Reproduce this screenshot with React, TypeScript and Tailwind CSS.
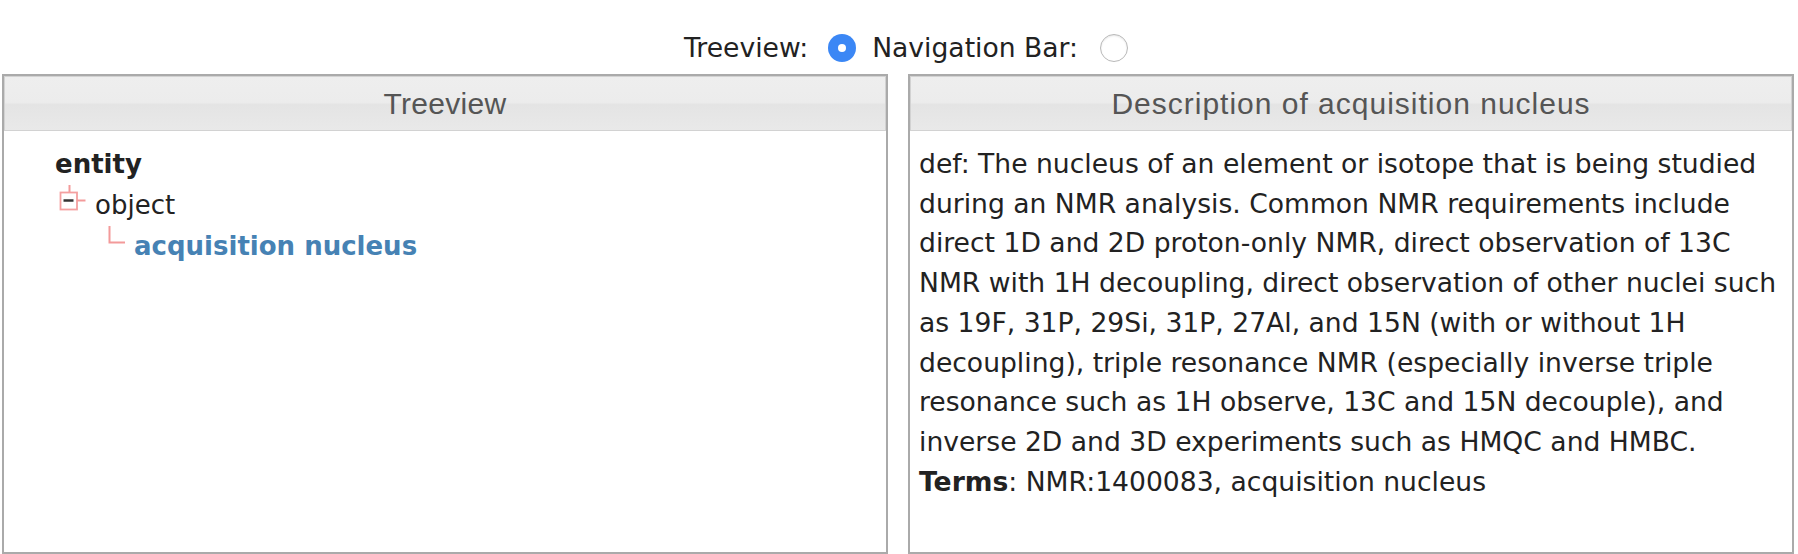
// Treeview / Description split panel page

const DESCRIPTION =
  "def: The nucleus of an element or isotope that is being studied during an NMR analysis. Common NMR requirements include direct 1D and 2D proton-only NMR, direct observation of 13C NMR with 1H decoupling, direct observation of other nuclei such as 19F, 31P, 29Si, 31P, 27Al, and 15N (with or without 1H decoupling), triple resonance NMR (especially inverse triple resonance such as 1H observe, 13C and 15N decouple), and inverse 2D and 3D experiments such as HMQC and HMBC.";

function Radio({ checked }: { checked?: boolean }) {
  if (checked) {
    return (
      <span className="flex h-[28px] w-[28px] items-center justify-center rounded-full bg-[#3b87f5]">
        <span className="block h-[8px] w-[8px] rounded-full bg-white" />
      </span>
    );
  }
  return (
    <span className="block h-[28px] w-[28px] rounded-full border border-[#b9b9b9] bg-white shadow-[inset_0_1px_2px_rgba(0,0,0,0.1)]" />
  );
}

function PanelHeader({ title, tracking }: { title: string; tracking: string }) {
  return (
    <div
      className={`flex h-[55px] items-center justify-center border border-[#d2d2d2] bg-[linear-gradient(to_bottom,#eeeeee_0%,#ececec_48%,#e4e4e4_52%,#e9e9e9_100%)] font-['Liberation_Sans',Arial,sans-serif] text-[30px] text-[#555555] ${tracking}`}
    >
      {title}
    </div>
  );
}

export default function App() {
  return (
    <div className="min-h-screen bg-white font-['DejaVu_Sans',Verdana,sans-serif] text-[26px] text-[#222222]">
      {/* 상단 보기 전환 */}
      <div className="flex h-[74px] items-center justify-center pt-[22px] pl-[14px] text-[26.6px]">
        <span>Treeview:</span>
        <span className="ml-[20px]">
          <Radio checked />
        </span>
        <span className="ml-[16px]">Navigation Bar:</span>
        <span className="ml-[22px]">
          <Radio />
        </span>
      </div>

      <div className="flex gap-[20px] pl-[2px] pr-[4px]">
        {/* 트리 */}
        <div className="flex h-[480px] flex-1 flex-col border-2 border-[#aaaaaa]">
          <PanelHeader title="Treeview" tracking="tracking-[0.3px]" />
          <div className="pt-[13px] leading-[41px]">
            <div className="h-[41px] pl-[51px] font-bold">entity</div>
            <div className="flex h-[41px] pl-[54px]">
              <svg width="30" height="41" className="shrink-0">
                <line x1="11.5" y1="-2" x2="11.5" y2="7" stroke="#f39a9a" strokeWidth="2" />
                <rect x="2.5" y="7.5" width="16.5" height="17" fill="white" stroke="#f4a0a0" strokeWidth="1.8" />
                <line x1="5.5" y1="15.5" x2="15.5" y2="15.5" stroke="#333" strokeWidth="2.5" />
                <line x1="19" y1="15.5" x2="27.5" y2="15.5" stroke="#f39a9a" strokeWidth="2" />
              </svg>
              <span className="ml-[7px]">object</span>
            </div>
            <div className="flex h-[41px] pl-[100px]">
              <svg width="22" height="41" className="shrink-0">
                <path d="M5.5 -4 V16.5 H21" fill="none" stroke="#f39a9a" strokeWidth="2" />
              </svg>
              <span className="ml-[8px] font-bold text-[#4682b4]">acquisition nucleus</span>
            </div>
          </div>
        </div>

        {/* 설명 */}
        <div className="flex h-[480px] flex-1 flex-col border-2 border-[#aaaaaa]">
          <PanelHeader title="Description of acquisition nucleus" tracking="tracking-[1px]" />
          <div className="pt-[13px] pl-[9px] pr-[10px] text-[26.6px] leading-[39.7px]">
            <p>{DESCRIPTION}</p>
            <p>
              <b>Terms</b>: NMR:1400083, acquisition nucleus
            </p>
          </div>
        </div>
      </div>
    </div>
  );
}
